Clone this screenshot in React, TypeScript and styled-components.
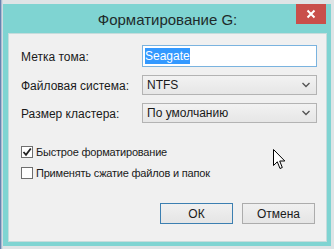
import React from "react";
import styled, { createGlobalStyle } from "styled-components";

const GlobalStyle = createGlobalStyle`
  html, body {
    margin: 0;
    padding: 0;
    width: 334px;
    height: 249px;
    overflow: hidden;
    background: linear-gradient(90deg, #3d5f9c 0, #8fa6c4 1px, #c9d3dc 2px, #dfe4e6 3px);
  }
  #root {
    font-family: "Liberation Sans", Arial, sans-serif;
  }
`;

const Desktop = styled.div`
  padding: 4px 3px 3px 3px;
  height: 249px;
  box-sizing: border-box;
`;

const Window = styled.div`
  position: relative;
  width: 328px;
  height: 242px;
  background: #7fd4d2;
  box-sizing: border-box;
  padding: 0 4px 4px 5px;
  display: flex;
  flex-direction: column;
`;

const TitleBar = styled.div`
  height: 29px;
  display: flex;
  align-items: center;
  justify-content: center;
  font-size: 15px;
  color: #1e2b2b;
  padding-top: 1px;
  box-sizing: border-box;
`;

const CloseButton = styled.div`
  position: absolute;
  top: 0;
  right: 5px;
  width: 30px;
  height: 20px;
  background: #c94f4b;
  display: flex;
  align-items: center;
  justify-content: center;
`;

const Client = styled.div`
  flex: 1;
  background: #f0f0f0;
  border: 1px solid #c6dcdc;
  padding: 11px 9px 0 12px;
  display: flex;
  flex-direction: column;
  position: relative;
`;

const FormGrid = styled.div`
  display: grid;
  grid-template-columns: 121px 175px;
  grid-template-rows: 22px 20px 20px;
  row-gap: 8px;
  align-items: center;
  font-size: 12px;
  color: #1a1a1a;
`;

const Label = styled.div`
  padding-top: 1px;
`;

const TextInput = styled.div`
  height: 22px;
  box-sizing: border-box;
  border: 1px solid #7ab3df;
  background: #fff;
  display: flex;
  align-items: center;
  padding-left: 2px;
`;

const Selected = styled.span`
  background: #3399ff;
  color: #fff;
  padding: 1px 0;
`;

const Select = styled.div`
  height: 20px;
  box-sizing: border-box;
  border: 1px solid #b3b3b3;
  background: linear-gradient(#f2f2f2, #e6e6e6);
  display: flex;
  align-items: center;
  justify-content: space-between;
  padding: 0 6px 0 4px;
`;

const Checks = styled.div`
  margin-top: 22px;
  display: flex;
  flex-direction: column;
  gap: 8px;
  font-size: 11px;
  letter-spacing: -0.2px;
  color: #1a1a1a;
`;

const CheckRow = styled.div`
  display: flex;
  align-items: center;
  gap: 3px;
  height: 13px;
`;

const Box = styled.div`
  width: 12px;
  height: 12px;
  box-sizing: border-box;
  border: 1px solid #6f6f6f;
  background: #fff;
  display: flex;
  align-items: center;
  justify-content: center;
`;

const Buttons = styled.div`
  margin-top: auto;
  margin-bottom: 17px;
  display: flex;
  justify-content: flex-end;
  gap: 9px;
  padding-right: 2px;
`;

const Button = styled.div<{ $primary?: boolean }>`
  width: 73px;
  height: 21px;
  box-sizing: border-box;
  border: 1px solid ${(p) => (p.$primary ? "#3c7fb1" : "#acacac")};
  background: linear-gradient(#f0f0f0, #e5e5e5);
  display: flex;
  align-items: center;
  justify-content: center;
  font-size: 12px;
  color: #1a1a1a;
`;

const Cursor = styled.svg`
  position: absolute;
  left: 264px;
  top: 115px;
`;

const Chevron = () => (
  <svg width="8" height="6" viewBox="0 0 8 6">
    <path d="M0.5 1 L4 4.5 L7.5 1" fill="none" stroke="#555" strokeWidth="1.4" />
  </svg>
);

export default function App() {
  return (
    <>
      <GlobalStyle />
      <Desktop>
        <Window>
          <TitleBar>Форматирование G:</TitleBar>
          <CloseButton>
            <svg width="10" height="10" viewBox="0 0 10 10">
              <path d="M1.5 1.5 L8.5 8.5 M8.5 1.5 L1.5 8.5" stroke="#fff" strokeWidth="2" />
            </svg>
          </CloseButton>
          <Client>
            <FormGrid>
              <Label>Метка тома:</Label>
              <TextInput>
                <Selected>Seagate</Selected>
              </TextInput>
              <Label>Файловая система:</Label>
              <Select>
                <span>NTFS</span>
                <Chevron />
              </Select>
              <Label>Размер кластера:</Label>
              <Select>
                <span>По умолчанию</span>
                <Chevron />
              </Select>
            </FormGrid>
            <Checks>
              <CheckRow>
                <Box>
                  <svg width="10" height="10" viewBox="0 0 10 10">
                    <path d="M1.5 5 L4 7.8 L8.8 1.5" fill="none" stroke="#222" strokeWidth="1.8" />
                  </svg>
                </Box>
                <span>Быстрое форматирование</span>
              </CheckRow>
              <CheckRow>
                <Box />
                <span>Применять сжатие файлов и папок</span>
              </CheckRow>
            </Checks>
            <Buttons>
              <Button $primary>ОК</Button>
              <Button>Отмена</Button>
            </Buttons>
            <Cursor width="13" height="21" viewBox="0 0 13 21">
              <path
                d="M0.5 0.5 L0.5 16.5 L4.3 12.8 L7 19.5 L9.3 18.5 L6.7 12 L11.8 12 Z"
                fill="#fff"
                stroke="#000"
                strokeWidth="1"
                strokeLinejoin="miter"
              />
            </Cursor>
          </Client>
        </Window>
      </Desktop>
    </>
  );
}
